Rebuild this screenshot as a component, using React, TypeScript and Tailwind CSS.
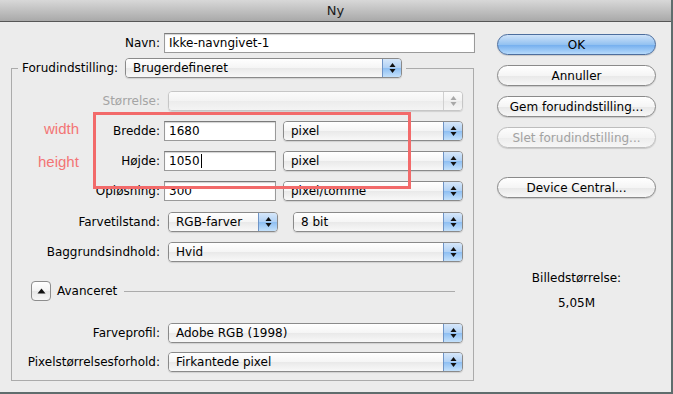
const font = { fontFamily: '"DejaVu Sans", "Liberation Sans", sans-serif' };

function Arrows({ disabled }: { disabled?: boolean }) {
  const c = disabled ? "#a8a8a8" : "#111111";
  return (
    <svg width="7" height="12" viewBox="0 0 7 12">
      <polygon points="3.5,1 6.5,5 0.5,5" fill={c} />
      <polygon points="0.5,7 6.5,7 3.5,11" fill={c} />
    </svg>
  );
}

function Select({ w, text, disabled }: { w: string; text?: string; disabled?: boolean }) {
  return (
    <div
      className={`flex h-[20px] ${w} overflow-hidden rounded-[4px] border shadow-[0_1px_1px_rgba(0,0,0,0.12)] ${
        disabled ? "border-[#c6c6c6]" : "border-[#8a8a8a]"
      }`}
    >
      <div
        className={`flex flex-1 items-center pl-[7px] text-[12px] leading-none ${
          disabled
            ? "bg-[linear-gradient(to_bottom,#fbfbfb_0%,#f3f3f3_50%,#ececec_51%,#f4f4f4_100%)]"
            : "bg-[linear-gradient(to_bottom,#ffffff_0%,#f5f5f5_50%,#e9e9e9_51%,#f8f8f8_100%)] text-black"
        }`}
      >
        {text}
      </div>
      <div
        className={`flex w-[19px] items-center justify-center border-l ${
          disabled
            ? "border-[#d0d0d0] bg-[linear-gradient(to_bottom,#fbfbfb_0%,#f2f2f2_50%,#ebebeb_51%,#f5f5f5_100%)]"
            : "border-[#6f94c6] bg-[linear-gradient(to_bottom,#d6e7fa_0%,#b0d1f5_50%,#8dbef2_51%,#c4e1fb_100%)]"
        }`}
      >
        <Arrows disabled={disabled} />
      </div>
    </div>
  );
}

function Field({ w, value, caret }: { w: string; value: string; caret?: boolean }) {
  return (
    <div
      className={`flex h-[20px] ${w} items-center border border-[#9a9a9a] border-t-[#7a7a7a] bg-white pl-[4px] text-[12px] text-black shadow-[inset_0_1px_1px_rgba(0,0,0,0.18)]`}
    >
      {value}
      {caret && <span className="ml-px h-[14px] w-px bg-black" />}
    </div>
  );
}

function Label({ children, gray }: { children: string; gray?: boolean }) {
  return (
    <div className={`w-[148px] text-right text-[12px] ${gray ? "text-[#a4a4a4]" : "text-black"}`}>
      {children}
    </div>
  );
}

function Button({ children, primary, disabled }: { children: string; primary?: boolean; disabled?: boolean }) {
  return (
    <div
      className={`flex h-[21px] w-[159px] items-center justify-center rounded-full border text-[12px] shadow-[0_1px_1px_rgba(0,0,0,0.15)] ${
        primary
          ? "border-[#4d6e9e] bg-[linear-gradient(to_bottom,#cfe3f9_0%,#94c2f1_50%,#72adee_51%,#b6dafb_100%)] text-black"
          : disabled
          ? "border-[#bdbdbd] bg-[linear-gradient(to_bottom,#fdfdfd_0%,#f4f4f4_50%,#ededed_51%,#f6f6f6_100%)] text-[#a2a2a2]"
          : "border-[#8a8a8a] bg-[linear-gradient(to_bottom,#ffffff_0%,#f5f5f5_50%,#e8e8e8_51%,#f7f7f7_100%)] text-black"
      }`}
    >
      {children}
    </div>
  );
}

export default function App() {
  return (
    <div
      className="relative h-[394px] w-[673px] overflow-hidden border-b-2 border-r-2 border-[#5f6d6d] bg-[#ececec]"
      style={font}
    >
      {/* title bar */}
      <div className="flex h-[22px] items-center justify-center border-b border-[#575757] bg-[linear-gradient(to_bottom,#d8d8d8,#a9a9a9)] text-[13px] text-[#1a1a1a]">
        Ny
      </div>

      <div className="flex">
        {/* left column */}
        <div className="w-[480px] pt-[11px]">
          <div className="flex h-[20px] items-center">
            <div className="w-[160px] text-right text-[12px]">Navn:</div>
            <div className="ml-[4px]">
              <Field w="w-[311px]" value="Ikke-navngivet-1" />
            </div>
          </div>

          <div className="ml-[11px] mt-[15px] w-[463px] border border-[#ababab] pb-[8px]">
            <div className="-mt-[11px] ml-[6px] flex h-[20px] w-fit items-center bg-[#ececec] px-[4px]">
              <span className="text-[12px]">Forudindstilling:</span>
              <div className="ml-[7px]">
                <Select w="w-[277px]" text="Brugerdefineret" />
              </div>
            </div>

            <div className="mt-[13px] flex flex-col gap-[10px]">
              <div className="flex h-[20px] items-center">
                <Label gray>Størrelse:</Label>
                <div className="ml-[8px]">
                  <Select w="w-[295px]" disabled />
                </div>
              </div>
              <div className="flex h-[20px] items-center">
                <Label>Bredde:</Label>
                <div className="ml-[4px]">
                  <Field w="w-[112px]" value="1680" />
                </div>
                <div className="ml-[7px]">
                  <Select w="w-[180px]" text="pixel" />
                </div>
              </div>
              <div className="flex h-[20px] items-center">
                <Label>Højde:</Label>
                <div className="ml-[4px]">
                  <Field w="w-[112px]" value="1050" caret />
                </div>
                <div className="ml-[7px]">
                  <Select w="w-[180px]" text="pixel" />
                </div>
              </div>
              <div className="flex h-[20px] items-center">
                <Label>Opløsning:</Label>
                <div className="ml-[4px]">
                  <Field w="w-[112px]" value="300" />
                </div>
                <div className="ml-[7px]">
                  <Select w="w-[180px]" text="pixel/tomme" />
                </div>
              </div>
              <div className="mt-px flex h-[20px] items-center">
                <Label>Farvetilstand:</Label>
                <div className="ml-[8px]">
                  <Select w="w-[110px]" text="RGB-farver" />
                </div>
                <div className="ml-[15px]">
                  <Select w="w-[170px]" text="8 bit" />
                </div>
              </div>
              <div className="flex h-[20px] items-center">
                <Label>Baggrundsindhold:</Label>
                <div className="ml-[8px]">
                  <Select w="w-[295px]" text="Hvid" />
                </div>
              </div>
            </div>

            <div className="ml-[19px] mt-[19px] flex h-[20px] items-center">
              <div className="flex h-[20px] w-[20px] items-center justify-center rounded-[4px] border border-[#8d8d8d] bg-[linear-gradient(to_bottom,#ffffff_0%,#f3f3f3_50%,#e6e6e6_51%,#f6f6f6_100%)]">
                <svg width="9" height="6" viewBox="0 0 9 6">
                  <polygon points="4.5,0.5 8.5,5.5 0.5,5.5" fill="#111" />
                </svg>
              </div>
              <span className="ml-[6px] text-[12px]">Avanceret</span>
              <div className="ml-[7px] h-px w-[331px] bg-[#ababab]" />
            </div>

            <div className="mt-[22px] flex flex-col gap-[9px]">
              <div className="flex h-[20px] items-center">
                <Label>Farveprofil:</Label>
                <div className="ml-[8px]">
                  <Select w="w-[295px]" text="Adobe RGB (1998)" />
                </div>
              </div>
              <div className="flex h-[20px] items-center">
                <Label>Pixelstørrelsesforhold:</Label>
                <div className="ml-[8px]">
                  <Select w="w-[295px]" text="Firkantede pixel" />
                </div>
              </div>
            </div>
          </div>
        </div>

        {/* right column */}
        <div className="flex flex-col pl-[17px] pt-[12px]">
          <div className="flex flex-col gap-[10px]">
            <Button primary>OK</Button>
            <Button>Annuller</Button>
            <Button>Gem forudindstilling...</Button>
            <Button disabled>Slet forudindstilling...</Button>
          </div>
          <div className="mt-[29px]">
            <Button>Device Central...</Button>
          </div>
          <div className="mt-[73px] w-[159px] text-center text-[12px] leading-[15px]">Billedstørrelse:</div>
          <div className="mt-[10px] w-[159px] text-center text-[12px] leading-[15px]">5,05M</div>
        </div>
      </div>

      {/* red annotation */}
      <div className="pointer-events-none absolute left-[93px] top-[112px] h-[77px] w-[318px] border-[3px] border-[#f26a6a]" />
      <div
        className="absolute left-[44px] top-[120px] text-[15px] leading-[18px] text-[#f37575]"
        style={{ fontFamily: '"Liberation Sans", sans-serif' }}
      >
        width
      </div>
      <div
        className="absolute left-[38px] top-[153px] text-[15px] leading-[18px] text-[#f37575]"
        style={{ fontFamily: '"Liberation Sans", sans-serif' }}
      >
        height
      </div>
    </div>
  );
}
